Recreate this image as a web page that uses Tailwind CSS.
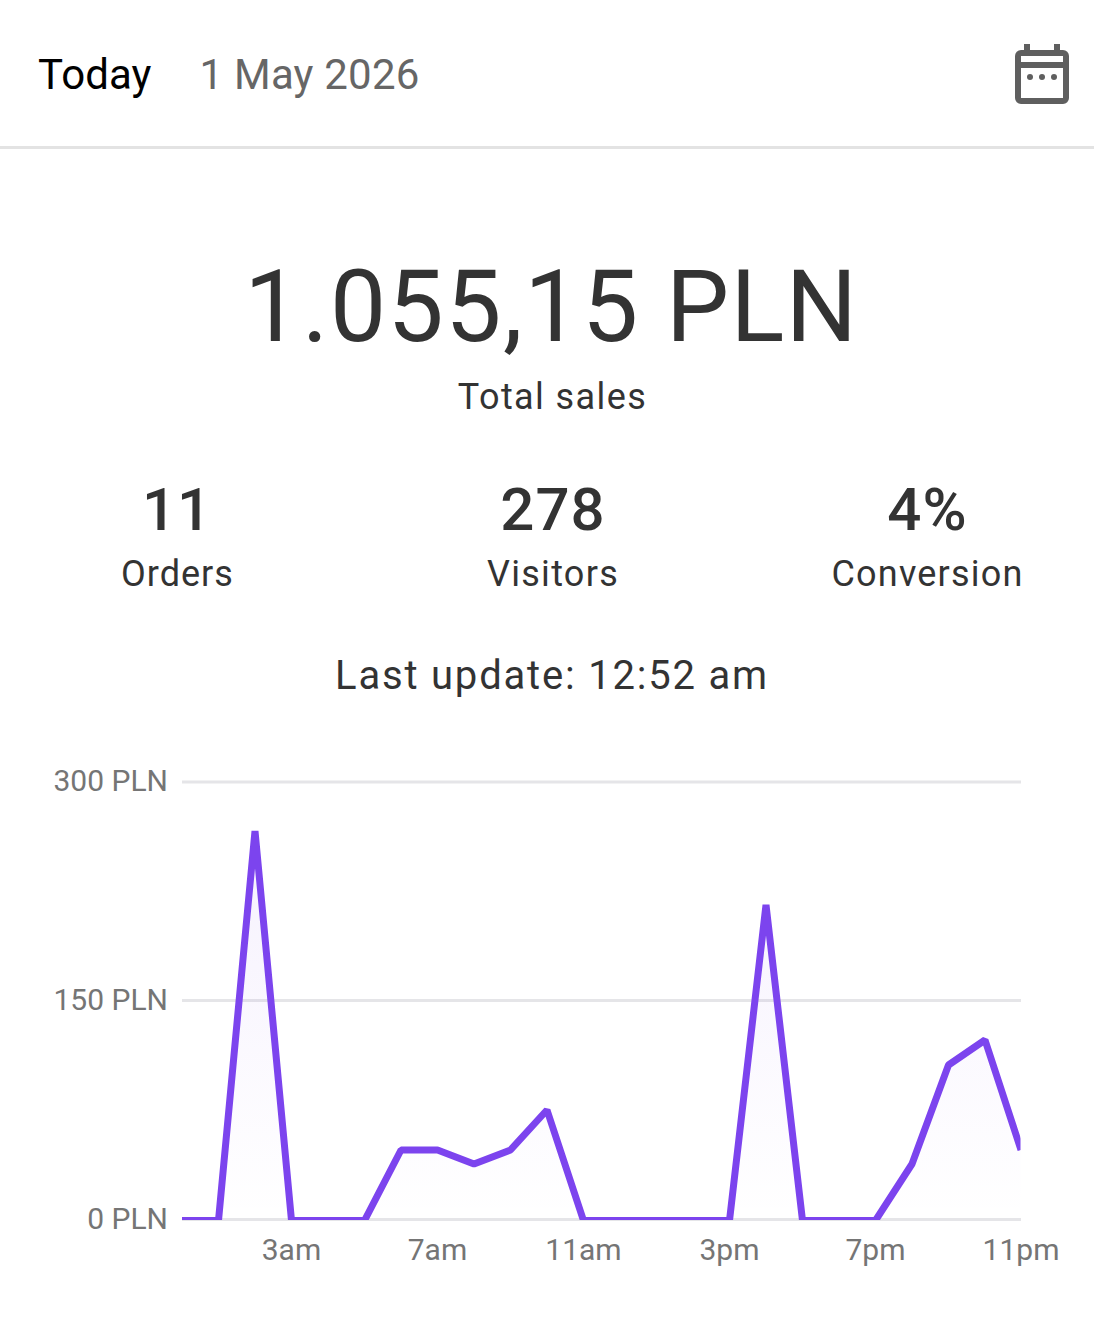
<!DOCTYPE html>
<html lang="en">
<head>
    <meta charset="UTF-8">
    <title>Today</title>
    <script src="https://cdn.jsdelivr.net/npm/@tailwindcss/browser@4"></script>
</head>
<body class="bg-white font-['Roboto',sans-serif] w-[1094px] h-[1319px] overflow-hidden">
    <header class="flex items-center h-[149px] pl-[38px] pr-[25px] pt-[2px] border-b-[3px] border-[#e3e3e3]">
        <span class="text-[42px] text-black tracking-[0.1px]">Today</span>
        <span class="ml-[48px] text-[42px] text-[#666666] tracking-[0.2px]">1 May 2026</span>
        <svg class="ml-auto -mt-[1px]" width="54" height="60" viewBox="0 0 54 60" fill="#5f5f5f" fill-rule="evenodd">
            <path d="M9 0h6v6h24V0h6v6h3a6 6 0 0 1 6 6v42a6 6 0 0 1-6 6H6a6 6 0 0 1-6-6V12a6 6 0 0 1 6-6h3zM6 12v6h42v-6zM6 24v30h42V24z"/>
            <circle cx="15" cy="33" r="3"/><circle cx="27" cy="33" r="3"/><circle cx="39" cy="33" r="3"/>
        </svg>
    </header>
    <main class="text-[#333333]">
        <div class="text-center pt-[100px] pl-[9px]">
            <div class="text-[100px] leading-[116px] tracking-[1.5px]">1.055,15 PLN</div>
            <div class="text-[36px] leading-[42px] mt-[11px] pl-[2px] tracking-[1.4px]">Total sales</div>
        </div>
        <div class="flex mt-[57px] text-center">
            <div class="w-[354px]">
                <div class="text-[60px] leading-[70px] font-medium tracking-[1px]">11</div>
                <div class="text-[36px] leading-[42px] mt-[8px] pl-[1px] tracking-[1px]">Orders</div>
            </div>
            <div class="w-[398px]">
                <div class="text-[60px] leading-[70px] font-medium tracking-[1px]">278</div>
                <div class="text-[36px] leading-[42px] mt-[8px] tracking-[1.3px]">Visitors</div>
            </div>
            <div class="w-[342px] pl-[9px]">
                <div class="text-[60px] leading-[70px] font-medium tracking-[1px]">4%</div>
                <div class="text-[36px] leading-[42px] mt-[8px] tracking-[1.2px]">Conversion</div>
            </div>
        </div>
        <div class="text-center text-[40px] leading-[50px] mt-[56px] pl-[10px] tracking-[1.8px]">Last update: 12:52 am</div>
    </main>
    <svg class="block mt-[49px]" width="1094" height="600" viewBox="0 750 1094 600">
        <defs>
            <linearGradient id="area" x1="0" y1="832" x2="0" y2="1219" gradientUnits="userSpaceOnUse">
                <stop offset="0" stop-color="#7c3aed" stop-opacity="0.07"/>
                <stop offset="1" stop-color="#7c3aed" stop-opacity="0"/>
            </linearGradient>
            <clipPath id="plot"><rect x="182" y="780" width="838.5" height="440"/></clipPath>
        </defs>
        <g stroke="#e5e5e8" stroke-width="3">
            <line x1="182" y1="782" x2="1021" y2="782"/>
            <line x1="182" y1="1000.5" x2="1021" y2="1000.5"/>
            <line x1="182" y1="1219.5" x2="1021" y2="1219.5"/>
        </g>
        <g clip-path="url(#plot)">
            <polygon fill="url(#area)" points="182,1220 218.5,1220 255,831 291.5,1220 364.5,1220 401,1150 437.5,1150 474,1164 510.5,1150 547,1110 583.5,1220 729.5,1220 766,905 802.5,1220 875.5,1220 912,1164 948.5,1065 985,1040 1021,1150 1021,1220"/>
            <polyline fill="none" stroke="#7c44ee" stroke-width="7" stroke-linejoin="bevel" points="182,1220.5 218.5,1220.5 255,831 291.5,1220.5 364.5,1220.5 401,1150 437.5,1150 474,1164 510.5,1150 547,1110 583.5,1220.5 729.5,1220.5 766,905 802.5,1220.5 875.5,1220.5 912,1164 948.5,1065 985,1040 1021,1150"/>
        </g>
        <g fill="#757575" font-size="30" text-anchor="end">
            <text x="168" y="791">300 PLN</text>
            <text x="168" y="1010">150 PLN</text>
            <text x="168" y="1229">0 PLN</text>
        </g>
        <g fill="#757575" font-size="30" text-anchor="middle">
            <text x="291.5" y="1260">3am</text>
            <text x="437.5" y="1260">7am</text>
            <text x="583.5" y="1260">11am</text>
            <text x="729.5" y="1260">3pm</text>
            <text x="875.5" y="1260">7pm</text>
            <text x="1021" y="1260">11pm</text>
        </g>
    </svg>
</body>
</html>
